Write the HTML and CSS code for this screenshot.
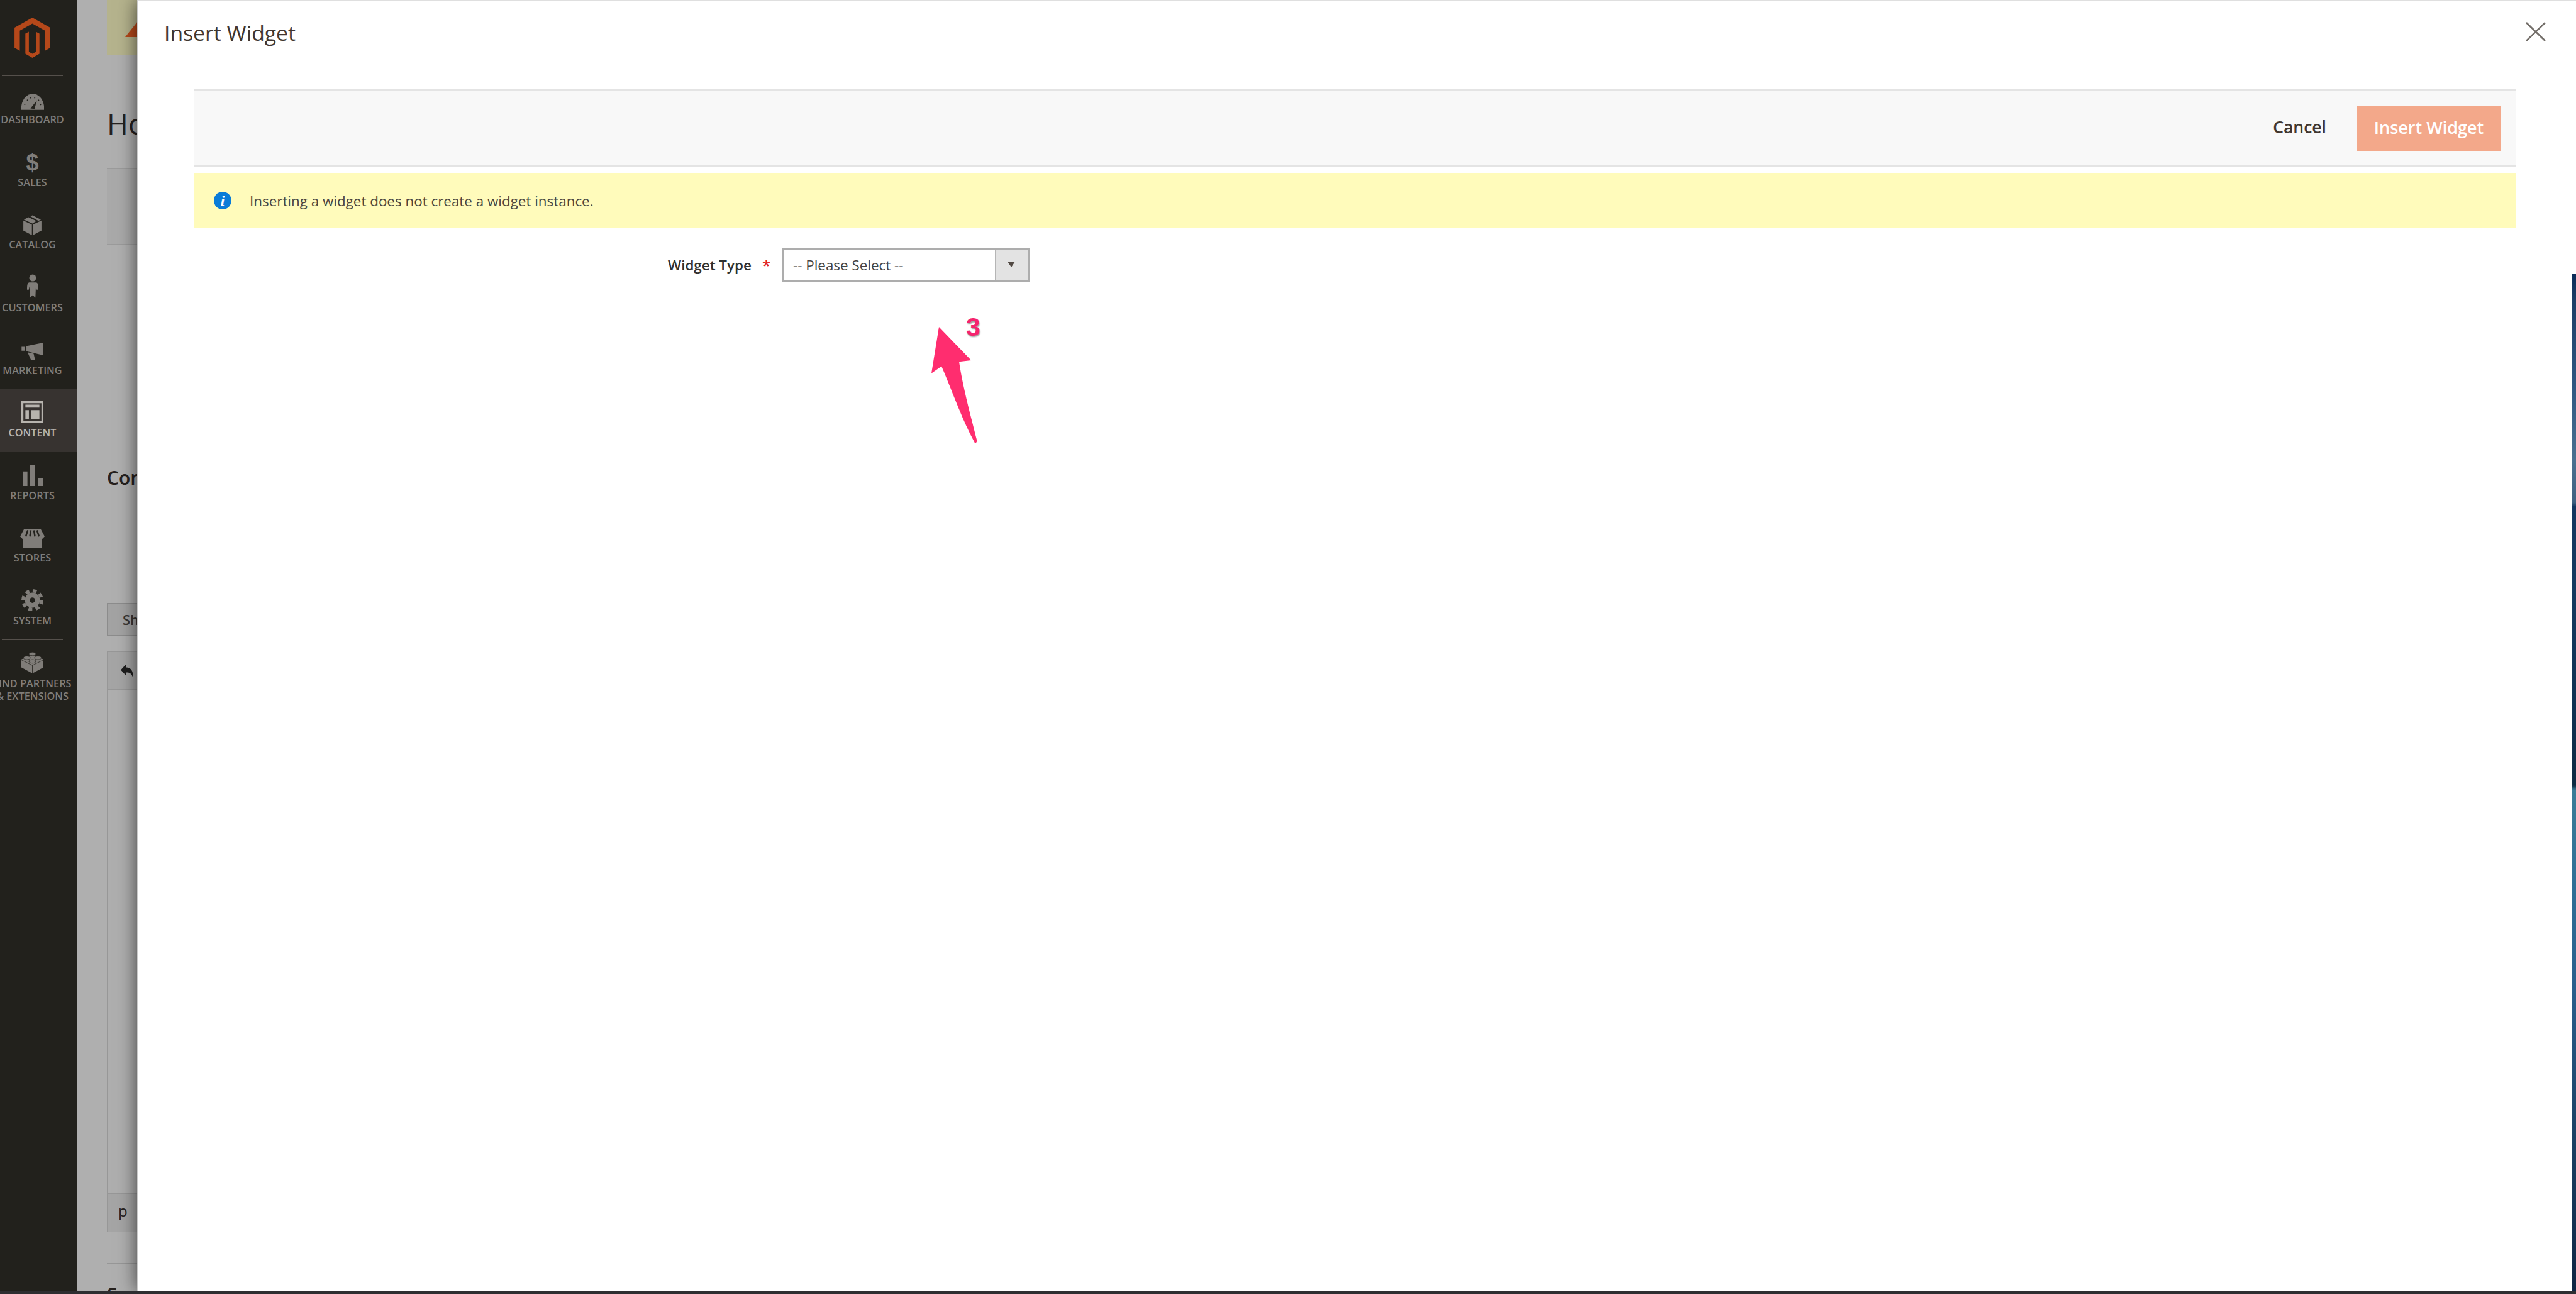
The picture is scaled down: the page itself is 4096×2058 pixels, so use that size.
FILE: index.html
```html
<!DOCTYPE HTML>
<html lang="en" dir="ltr">
<head>
    <meta charset="utf-8"/>
    <title>Insert Widget</title>
<link rel="stylesheet" href="styles.css">
</head>
<body>
    <div class="window">
        <!-- Admin menu -->
        <nav class="sidebar">
            <div class="logo">
                <svg width="57" height="64" viewBox="0 0 71 80"><path class="logo-mark" d="M35.5 0L71 20V60L60.5 66V26L35.5 12L10.5 26V66L0 60V20ZM35.5 80L21.5 72V32L28.5 28V68L35.5 72L42.5 68V28L49.5 32V72Z"/></svg>
            </div>
            <a class="nav-item">
                <span class="nav-icon">
                    <svg width="36" height="26" viewBox="0 0 45 32"><path d="M0 32V24C2 9 12 0 22.5 0S43 9 45 24V32Z"/><path class="cut" d="M18 29L31 13L26 30Z"/><path class="cut-line" d="M6 22L8 20M11 13L13 12M18 7L19 9M27 7L26 9M35 12L33 14M39 21L37 22"/></svg>
                </span>
                <span class="nav-label">DASHBOARD</span>
            </a>
            <a class="nav-item">
                <span class="nav-icon"><span class="dollar">$</span></span>
                <span class="nav-label">SALES</span>
            </a>
            <a class="nav-item">
                <span class="nav-icon">
                    <svg width="29" height="32" viewBox="0 0 36 40"><path d="M0 11L17 19V40L0 31ZM36 11V31L19 40V19ZM1 9L10 4.500L26 12L18 17ZM14 2.500L18 .5L35 9L30 11.500Z"/></svg>
                </span>
                <span class="nav-label">CATALOG</span>
            </a>
            <a class="nav-item">
                <span class="nav-icon">
                    <svg width="18" height="38" viewBox="0 0 23 47"><circle cx="11.500" cy="7" r="7"/><path d="M4 16H19C22 17 23 20 23 31H19.500L18 24L17 47L11.500 42L6 47L5 24L3.500 31H0C0 20 1 17 4 16Z"/></svg>
                </span>
                <span class="nav-label">CUSTOMERS</span>
            </a>
            <a class="nav-item">
                <span class="nav-icon">
                    <svg width="35" height="28" viewBox="0 0 43 35"><path d="M0 8H7V16H0ZM9 7L43 0V25L9 17ZM12 19L24 22L27 35H19Z"/></svg>
                </span>
                <span class="nav-label">MARKETING</span>
            </a>
            <a class="nav-item active">
                <span class="nav-icon">
                    <svg width="35" height="35" viewBox="0 0 44 44"><path fill-rule="evenodd" d="M0 0H44V44H0ZM4 4V40H40V4Z"/><path d="M8 7H36V13H8ZM8 18H15V36H8ZM19 18H36V36H19Z"/></svg>
                </span>
                <span class="nav-label">CONTENT</span>
            </a>
            <a class="nav-item">
                <span class="nav-icon">
                    <svg width="32" height="33" viewBox="0 0 40 41"><path d="M0 12H9.500V41H0ZM15 0H25V41H15ZM30 26H40V41H30Z"/></svg>
                </span>
                <span class="nav-label">REPORTS</span>
            </a>
            <a class="nav-item">
                <span class="nav-icon">
                    <svg width="39" height="31" viewBox="0 0 48 38"><path d="M5 20H43V38H5ZM8 0H40L48 15L43 20H5L0 15Z"/><path class="cut-line wide" d="M15 3L11 15M21 3L19 15M27 3L29 15M33 3L37 15"/></svg>
                </span>
                <span class="nav-label">STORES</span>
            </a>
            <a class="nav-item">
                <span class="nav-icon">
                    <svg width="35" height="35" viewBox="0 0 44 44"><circle cx="22" cy="22" r="15"/><circle class="teeth" cx="22" cy="22" r="18.500"/><circle class="cut" cx="22" cy="22" r="5.500"/></svg>
                </span>
                <span class="nav-label">SYSTEM</span>
            </a>
            <a class="nav-item partners">
                <span class="nav-icon">
                    <svg width="35" height="35" viewBox="0 0 44 44"><path d="M22 6L44 16V32L22 44L0 32V16Z"/><path class="cut-line thin" d="M0 17L22 28L44 17M22 28V44"/><ellipse class="stud" cx="22" cy="5" rx="7" ry="3.500"/><ellipse class="stud" cx="11" cy="13" rx="7" ry="3.500"/><ellipse class="stud" cx="33" cy="13" rx="7" ry="3.500"/><ellipse class="stud" cx="22" cy="20" rx="7" ry="3.500"/></svg>
                </span>
                <span class="nav-label">FIND PARTNERS<br>&amp; EXTENSIONS</span>
            </a>
        </nav>

        <!-- Page behind the dialog, dimmed -->
        <main class="page">
            <div class="notice">
                <svg width="48" height="30" viewBox="0 0 48 30"><path class="notice-mark" d="M0 30L24 0L48 30Z"/></svg>
            </div>
            <h1 class="page-title">Home page</h1>
            <div class="page-actions"></div>
            <h2 class="section-title content-title">Content</h2>
            <button class="editor-toggle">Show / Hide Editor</button>
            <div class="editor">
                <div class="editor-bar">
                    <svg width="20" height="23" viewBox="0 0 25 29"><path d="M0 12L11 0V7C20 7 25 13 25 29C22 19 18 17 11 17V24Z"/></svg>
                </div>
                <div class="editor-body"></div>
                <div class="editor-status">p</div>
            </div>
            <h2 class="section-title seo-title">Search Engine Optimization</h2>
        </main>

        <!-- Insert widget dialog -->
        <div class="modal" role="dialog" aria-modal="true" aria-labelledby="modal-title">
            <header class="modal-header">
                <h2 id="modal-title" class="modal-title">Insert Widget</h2>
                <button class="modal-close" aria-label="close">
                    <svg width="32" height="31" viewBox="0 0 32 31"><path d="M1 1L31 30M31 1L1 30"/></svg>
                </button>
            </header>
            <div class="modal-content">
                <div class="toolbar">
                    <button class="btn-cancel">Cancel</button>
                    <button class="btn-primary">Insert Widget</button>
                </div>
                <div class="message">
                    <span class="message-icon">i</span>
                    <span>Inserting a widget does not create a widget instance.</span>
                </div>
                <div class="field">
                    <label class="field-label">Widget Type</label>
                    <span class="field-required">*</span>
                    <div class="select">
                        <span class="select-value">-- Please Select --</span>
                        <span class="select-arrow"></span>
                    </div>
                </div>
            </div>

            <!-- Annotation drawn on the screenshot -->
            <svg class="mark-arrow" width="80" height="193" viewBox="1840 640 100 240"><path d="M1860 647L1924 713L1900 716C1908 770 1925 830 1935 871Q1936 878 1931 877C1905 830 1885 770 1865 725L1845 739Z"/></svg>
            <span class="mark-number">3</span>
        </div>

        <div class="desktop-edge"></div>
    </div>
    <div class="dock"></div>
</body>
</html>
```

FILE: styles.css
```css
* {
    box-sizing: border-box;
}

html, body {
    height: 100%;
}

body {
    margin: 0;
    display: flex;
    flex-direction: column;
    overflow: hidden;
    font-family: "Open Sans", "Liberation Sans", sans-serif;
    color: #41362f;
    background: #fff;
}

button {
    font-family: inherit;
    border: 0;
    background: none;
    padding: 0;
}

h1, h2 {
    margin: 0;
}

.window {
    position: relative;
    display: flex;
    flex: 1;
    min-height: 0;
    overflow: hidden;
}

.dock {
    height: 5px;
    background: #2e2e31;
}

/* sidebar */
.sidebar {
    flex: none;
    width: 122px;
    overflow: hidden;
    background: #22211c;
}

.logo {
    position: relative;
    height: 121px;
    padding: 28px 0 0 23px;
}

.logo::after {
    content: "";
    position: absolute;
    left: 3px;
    bottom: 0;
    width: 97px;
    height: 1px;
    background: #55504b;
}

.logo-mark {
    fill: #b5481a;
}

.nav-item {
    display: flex;
    flex-direction: column;
    align-items: center;
    height: 99.600px;
    padding-right: 19px;
    color: #807d79;
    fill: #807d79;
}

.nav-item.active {
    color: #b7b4ae;
    fill: #b7b4ae;
    background: #373330;
}

.nav-item.partners {
    position: relative;
}

.nav-item.partners::before {
    content: "";
    position: absolute;
    left: 3px;
    top: 0;
    width: 97px;
    height: 1px;
    background: #55504b;
}

.nav-icon {
    display: flex;
    align-items: flex-end;
    justify-content: center;
    flex: none;
    height: 54px;
}

.nav-icon svg {
    display: block;
}

.cut {
    fill: #22211c;
}

.cut-line {
    fill: none;
    stroke: #22211c;
    stroke-width: 2;
}

.cut-line.wide {
    stroke-width: 3;
}

.cut-line.thin {
    stroke-width: 1;
}

.teeth {
    fill: none;
    stroke: #807d79;
    stroke-width: 7;
    stroke-dasharray: 7.800 6.730;
}

.stud {
    stroke: #22211c;
    stroke-width: 1;
}

.dollar {
    font-family: "Liberation Sans", sans-serif;
    font-weight: 700;
    font-size: 36px;
    line-height: 32px;
    display: block;
}

.nav-label {
    flex: none;
    margin-top: 5.200px;
    font-size: 16.300px;
    line-height: 20.900px;
    font-weight: 600;
    text-align: center;
    white-space: nowrap;
}

/* page behind the dialog */
.page {
    flex: 1;
    min-width: 0;
    padding-left: 48px;
    background: #afafaf;
    overflow: hidden;
    color: #26211e;
}

.notice {
    display: flex;
    align-items: flex-end;
    height: 88px;
    padding: 0 0 28.600px 29px;
    background: #b5b38d;
}

.notice-mark {
    fill: #b8491a;
}

.page-title {
    margin-top: 79.600px;
    font-size: 46px;
    line-height: 56px;
    font-weight: 400;
}

.page-actions {
    margin-top: 43px;
    height: 122px;
    background: #a9a9a9;
    border-top: 1px solid #9b9b9b;
    border-bottom: 1px solid #9b9b9b;
}

.section-title {
    font-size: 30px;
    line-height: 36px;
    font-weight: 600;
    white-space: nowrap;
}

.content-title {
    margin-top: 353px;
}

.editor-toggle {
    display: block;
    margin-top: 181px;
    height: 52px;
    width: 260px;
    padding-left: 24px;
    text-align: left;
    font-size: 22px;
    font-weight: 600;
    color: #3a3633;
    background: #a3a3a3;
    border: 1px solid #8c8c8c;
}

.editor {
    margin-top: 25px;
    height: 924px;
    display: flex;
    flex-direction: column;
    border: 1px solid #979797;
    border-left-width: 2px;
    border-right: 0;
}

.editor-bar {
    height: 60px;
    padding: 19px 0 0 20px;
    background: #a5a5a5;
    border-bottom: 1px solid #979797;
}

.editor-bar svg {
    display: block;
    fill: #1d1d1d;
}

.editor-body {
    flex: 1;
    background: #aeaeae;
}

.editor-status {
    height: 61px;
    padding: 12px 0 0 16px;
    font-size: 24px;
    line-height: 30px;
    background: #a5a5a5;
    border-top: 1px solid #979797;
}

.seo-title {
    margin-top: 49px;
    padding-top: 31px;
    border-top: 1px solid #979797;
}

/* dialog */
.modal {
    position: absolute;
    top: 0;
    right: 0;
    bottom: 0;
    left: 218px;
    background: #fff;
    border-top: 1px solid #dfdfdf;
    border-left: 2px solid #c9c9c9;
    box-shadow: 0 0 28px rgba(0, 0, 0, 0.65);
}

.modal-header {
    display: flex;
    justify-content: space-between;
    align-items: flex-start;
    height: 141px;
    padding: 28px 48px 0 41px;
}

.modal-title {
    font-size: 33.700px;
    line-height: 46px;
    font-weight: 400;
}

.modal-close {
    margin-top: 6px;
    height: 31px;
}

.modal-close svg {
    display: block;
    fill: none;
    stroke: #736e69;
    stroke-width: 2.500;
}

.modal-content {
    padding: 0 95px 0 88px;
}

.toolbar {
    display: flex;
    justify-content: flex-end;
    align-items: center;
    gap: 48px;
    height: 123px;
    padding: 0 24px;
    background: #f8f8f8;
    border-top: 2px solid #e4e4e4;
    border-bottom: 2px solid #e4e4e4;
}

.btn-cancel {
    padding-bottom: 3px;
    font-size: 26.500px;
    font-weight: 600;
    color: #41362f;
}

.btn-primary {
    width: 230px;
    height: 72px;
    padding-bottom: 3px;
    font-size: 27px;
    font-weight: 600;
    color: #fff;
    background: #f3a88a;
}

.message {
    display: flex;
    align-items: center;
    gap: 29px;
    height: 88px;
    margin-top: 10px;
    padding-left: 32px;
    font-size: 22.400px;
    color: #4a4640;
    background: #fffbbb;
}

.message-icon {
    flex: none;
    width: 28px;
    height: 28px;
    border-radius: 50%;
    font-family: "Liberation Serif", serif;
    font-size: 24px;
    font-weight: 700;
    font-style: italic;
    line-height: 28px;
    text-align: center;
    color: #fff;
    background: #0a7cd8;
}

.field {
    display: flex;
    align-items: center;
    margin-top: 32px;
    padding-left: 754px;
}

.field-label {
    width: 133px;
    flex: none;
    font-size: 22.400px;
    font-weight: 600;
    color: #303030;
    white-space: nowrap;
}

.field-required {
    width: 49px;
    flex: none;
    padding-left: 17px;
    font-size: 24px;
    font-weight: 600;
    color: #e22626;
}

.select {
    display: flex;
    justify-content: space-between;
    align-items: center;
    width: 393px;
    height: 53px;
    border: 2px solid #adadad;
}

.select-value {
    padding-left: 15px;
    font-size: 22.400px;
    color: #444;
}

.select-arrow {
    position: relative;
    width: 53px;
    height: 100%;
    background: #e3e3e3;
    border-left: 2px solid #b5b5b5;
}

.select-arrow::after {
    content: "";
    position: absolute;
    top: 19px;
    left: 18px;
    border-top: 9px solid #514943;
    border-left: 6.500px solid transparent;
    border-right: 6.500px solid transparent;
}

/* annotation */
.mark-arrow {
    position: absolute;
    top: 513px;
    left: 1257px;
    fill: #ff2d6f;
}

.mark-number {
    position: absolute;
    top: 493px;
    left: 1316px;
    font-family: "Liberation Sans", sans-serif;
    font-weight: 700;
    font-size: 41px;
    line-height: 52px;
    color: #f5246e;
    -webkit-text-stroke: 5px #fff;
    paint-order: stroke fill;
    text-shadow: 1px 2px 2px rgba(0, 0, 0, 0.4);
}

/* sliver of desktop wallpaper past the browser window */
.desktop-edge {
    position: absolute;
    top: 435px;
    right: 0;
    bottom: 0;
    width: 6px;
    background: linear-gradient(#0a2c58 0, #1d3e66 2.600%, #2f5781 11%, #4a7090 18.300%, #3f6080 22.500%, #133660 22.900%, #163a60 30.700%, #0f3050 43.800%, #0e2a42 50.300%, #3b7c97 50.800%, #2f6f96 60%, #2a5f8c 70%, #1d4468 83%, #0e2442 100%);
}
```
